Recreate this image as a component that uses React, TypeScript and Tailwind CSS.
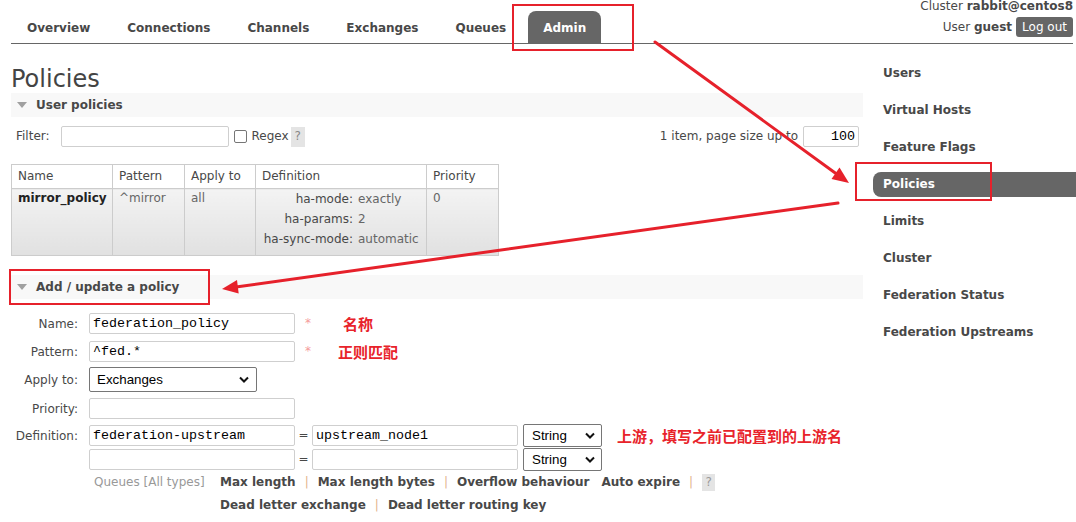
import React from 'react';
import clsx from 'clsx';

const navTabs = ['Overview', 'Connections', 'Channels', 'Exchanges', 'Queues', 'Admin'];
const sideItems = [
    'Users',
    'Virtual Hosts',
    'Feature Flags',
    'Policies',
    'Limits',
    'Cluster',
    'Federation Status',
    'Federation Upstreams',
];

const SectionBar: React.FC<{ title: string; className?: string }> = ({ title, className }) => (
    <div className={clsx('flex h-[24px] items-center bg-[#f8f8f8] pl-[6px]', className)}>
        <span className="h-0 w-0 border-x-[5px] border-t-[6px] border-x-transparent border-t-[#a0a0a0]" />
        <span className="ml-[9px] font-bold text-[#484848]">{title}</span>
    </div>
);

const TextBox: React.FC<{ value?: string; className?: string; right?: boolean }> = ({ value = '', className, right }) => (
    <div
        className={clsx(
            "h-[21px] shrink-0 rounded-[2px] border border-[#cfcfcf] bg-white px-[3px] font-['Liberation_Mono',monospace] text-[13.33px] leading-[19px] text-black",
            right && 'text-right',
            className
        )}
    >
        {value}
    </div>
);

const Select: React.FC<{ value: string; className?: string }> = ({ value, className }) => (
    <div
        className={clsx(
            "flex shrink-0 items-center justify-between rounded-[2px] border border-[#767676] bg-white font-['Liberation_Sans',sans-serif] text-[13.33px] text-black",
            className
        )}
    >
        <span>{value}</span>
        <svg width="10" height="7" viewBox="0 0 10 7">
            <path d="M1 1.5l4 4 4-4" stroke="#111" strokeWidth="2" fill="none" />
        </svg>
    </div>
);

const FormRow: React.FC<{ label: string; className?: string; children?: React.ReactNode }> = ({ label, className, children }) => (
    <div className={clsx('flex items-center', className)}>
        <div className="w-[67px] shrink-0 pt-[2px] text-right">{label}</div>
        <div className="ml-[11px] flex items-center whitespace-nowrap">{children}</div>
    </div>
);

const Sep = () => <span className="mx-[9px] font-normal text-[#e2b48e]">|</span>;

const cjk = "font-['Noto_Sans_CJK_SC',sans-serif] text-[15px] font-bold text-[#e8232b]";

const cell = 'border border-[#ccc] bg-linear-to-b from-[#f3f3f3] to-[#e1e1e1] align-top';

export default function App() {
    return (
        <div className="relative h-[522px] w-[1076px] overflow-hidden bg-white font-['DejaVu_Sans',sans-serif] text-[12px] leading-[15px] text-[#484848]">
            {/* Header */}
            <header className="ml-[11px] mr-[3px] flex h-[44px] justify-between border-b border-[#666]">
                <nav className="ml-[1px] flex items-end gap-[7px] self-end">
                    {navTabs.map((t) => (
                        <div
                            key={t}
                            className={clsx(
                                'flex h-[32px] items-center rounded-t-[8px] px-[15px] pt-[2px] font-bold',
                                t === 'Admin' ? 'bg-[#666] text-white' : 'text-[#484848]'
                            )}
                        >
                            {t}
                        </div>
                    ))}
                </nav>
                <div className="flex flex-col items-end">
                    <div className="leading-[13px]">
                        Cluster <b>rabbit@centos8</b>
                    </div>
                    <div className="mt-[4px] flex items-center">
                        <span>
                            User <b>guest</b>
                        </span>
                        <span className="ml-[4px] flex h-[20px] items-center rounded-[3px] bg-[#666] px-[6px] text-white">
                            Log out
                        </span>
                    </div>
                </div>
            </header>

            <div className="ml-[11px] flex">
                {/* Main column */}
                <main className="w-[852px] shrink-0">
                    <h1 className="mt-[21px] text-[24px] leading-[28px] font-normal text-[#444]">Policies</h1>
                    <SectionBar title="User policies" />

                    {/* Filter row */}
                    <div className="mt-[9px] flex h-[21px] items-center justify-between pr-[4px]">
                        <div className="flex items-center pl-[5px]">
                            <span>Filter:</span>
                            <TextBox className="ml-[11px] w-[168px]" />
                            <span className="ml-[5px] h-[13px] w-[13px] rounded-[2px] border border-[#767676] bg-white" />
                            <span className="ml-[5px]">Regex</span>
                            <span className="ml-[2px] flex h-[20px] w-[14px] items-center justify-center bg-[#e4e4e4] text-[#888]">?</span>
                        </div>
                        <div className="flex items-center">
                            <span>1 item, page size up to</span>
                            <TextBox value="100" right className="ml-[5px] w-[56px]" />
                        </div>
                    </div>

                    {/* Policies table */}
                    <table className="mt-[17px] w-[487px] table-fixed border-collapse">
                        <colgroup>
                            <col className="w-[101px]" />
                            <col className="w-[72px]" />
                            <col className="w-[71px]" />
                            <col className="w-[171px]" />
                            <col className="w-[72px]" />
                        </colgroup>
                        <thead>
                            <tr className="h-[24px]">
                                {['Name', 'Pattern', 'Apply to', 'Definition', 'Priority'].map((h) => (
                                    <th key={h} className="border border-[#ccc] px-[6px] text-left font-normal">
                                        {h}
                                    </th>
                                ))}
                            </tr>
                        </thead>
                        <tbody>
                            <tr className="h-[67px]">
                                <td className={clsx(cell, 'px-[6px] pt-[2px] font-bold text-[#222]')}>mirror_policy</td>
                                <td className={clsx(cell, 'px-[6px] pt-[2px] text-[#666]')}>^mirror</td>
                                <td className={clsx(cell, 'px-[6px] pt-[2px] text-[#666]')}>all</td>
                                <td className={clsx(cell, 'py-0 pl-[6px]')}>
                                    <div className="grid grid-cols-[91px_auto] gap-x-[5px] whitespace-nowrap leading-[20px]">
                                        <span className="text-right">ha-mode:</span>
                                        <span className="text-[#666]">exactly</span>
                                        <span className="text-right">ha-params:</span>
                                        <span className="text-[#666]">2</span>
                                        <span className="text-right">ha-sync-mode:</span>
                                        <span className="text-[#666]">automatic</span>
                                    </div>
                                </td>
                                <td className={clsx(cell, 'px-[6px] pt-[2px] text-[#666]')}>0</td>
                            </tr>
                        </tbody>
                    </table>

                    <SectionBar title="Add / update a policy" className="mt-[19px]" />

                    {/* Form */}
                    <div className="mt-[14px]">
                        <FormRow label="Name:">
                            <TextBox value="federation_policy" className="w-[206px]" />
                            <span className="ml-[10px] w-[38px] text-[#f59a9a]">*</span>
                            <span className={cjk}>名称</span>
                        </FormRow>
                        <FormRow label="Pattern:" className="mt-[7px]">
                            <TextBox value="^fed.*" className="w-[206px]" />
                            <span className="ml-[10px] w-[33px] text-[#f59a9a]">*</span>
                            <span className={cjk}>正则匹配</span>
                        </FormRow>
                        <FormRow label="Apply to:" className="mt-[5px]">
                            <Select value="Exchanges" className="h-[25px] w-[168px] pl-[7px] pr-[7px]" />
                        </FormRow>
                        <FormRow label="Priority:" className="mt-[6px]">
                            <TextBox className="w-[206px]" />
                        </FormRow>
                        <FormRow label="Definition:" className="mt-[5px]">
                            <TextBox value="federation-upstream" className="w-[206px]" />
                            <span className="w-[17px] text-center">=</span>
                            <TextBox value="upstream_node1" className="w-[206px]" />
                            <Select value="String" className="ml-[5px] h-[23px] w-[79px] pl-[8px] pr-[6px]" />
                            <span className={clsx(cjk, 'ml-[15px]')}>上游，填写之前已配置到的上游名</span>
                        </FormRow>
                        <FormRow label="" className="mt-[1px]">
                            <TextBox className="w-[206px]" />
                            <span className="w-[17px] text-center">=</span>
                            <TextBox className="w-[206px]" />
                            <Select value="String" className="ml-[5px] h-[23px] w-[79px] pl-[8px] pr-[6px]" />
                        </FormRow>

                        {/* Help links */}
                        <div className="ml-[78px] flex whitespace-nowrap leading-[23px]">
                            <div className="w-[131px] shrink-0 pl-[5px] text-[#999]">Queues [All types]</div>
                            <div className="font-bold text-[#484848]">
                                <div className="flex items-center">
                                    Max length
                                    <Sep />
                                    Max length bytes
                                    <Sep />
                                    Overflow behaviour
                                    <span className="ml-[12px]">Auto expire</span>
                                    <Sep />
                                    <span className="flex h-[17px] w-[13px] items-center justify-center bg-[#e4e4e4] font-normal text-[#999]">
                                        ?
                                    </span>
                                </div>
                                <div className="flex items-center">
                                    Dead letter exchange
                                    <Sep />
                                    Dead letter routing key
                                </div>
                            </div>
                        </div>
                    </div>
                </main>

                {/* Sidebar */}
                <aside className="ml-[10px] flex w-[203px] flex-col gap-[12px] pt-[17px]">
                    {sideItems.map((s) => (
                        <div
                            key={s}
                            className={clsx(
                                'flex h-[25px] items-center rounded-l-[8px] pl-[10px] font-bold',
                                s === 'Policies' ? 'bg-[#666] text-white' : 'text-[#484848]'
                            )}
                        >
                            {s}
                        </div>
                    ))}
                </aside>
            </div>

            {/* Red annotations drawn over the page */}
            <svg className="pointer-events-none absolute inset-0" width="1076" height="522">
                <g stroke="#e6212b" strokeWidth="2" fill="none">
                    <rect x="513" y="5" width="120" height="45" />
                    <rect x="856" y="163" width="135" height="37" />
                    <rect x="10" y="270" width="199" height="34" />
                </g>
                <g stroke="#e6212b" strokeWidth="3" strokeLinecap="round">
                    <line x1="655" y1="42" x2="838" y2="175" />
                    <line x1="838" y1="203" x2="236" y2="287" />
                </g>
                <g fill="#e6212b">
                    <polygon points="849,183 831.5,179 839.5,167.5" />
                    <polygon points="222,289 237,280 238.7,293.5" />
                </g>
            </svg>
        </div>
    );
}
